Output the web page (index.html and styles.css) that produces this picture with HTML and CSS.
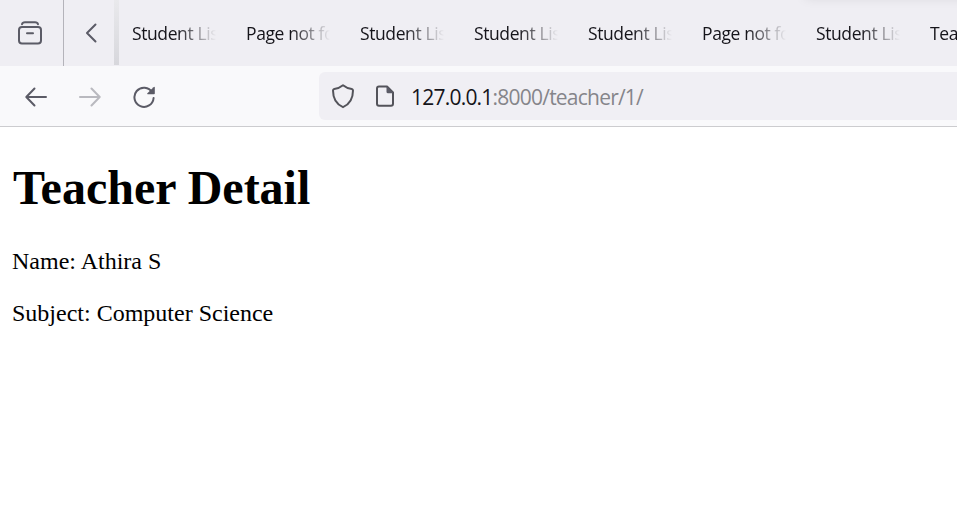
FILE: index.html
```html
<!DOCTYPE html>
<html lang="en">
<head>
<meta charset="utf-8">
<title>Teacher Detail</title>
<link rel="stylesheet" href="styles.css">
</head>
<body>
<header class="browser">
  <div class="tabbar">
    <div class="recent">
      <svg class="icon" width="26" height="26" viewBox="0 0 26 26"><path d="M5 4.2Q5.5 2.2 8 2.2H18Q20.500 2.200 21 4.200"/><rect x="2" y="7" width="22" height="16.500" rx="3"/><path d="M10 13.200H16"/></svg>
    </div>
    <div class="scroll">
      <svg class="icon" width="14" height="22" viewBox="0 0 14 22"><path d="M11.500 2.500L3 11L11.500 19.500"/></svg>
    </div>
    <nav class="tabs">
      <div class="tab"><span class="label">Student List</span></div>
      <div class="tab"><span class="label">Page not found</span></div>
      <div class="tab"><span class="label">Student List</span></div>
      <div class="tab"><span class="label">Student List</span></div>
      <div class="tab"><span class="label">Student List</span></div>
      <div class="tab"><span class="label">Page not found</span></div>
      <div class="tab"><span class="label">Student List</span></div>
      <div class="tab"><span class="label">Teacher Detail</span></div>
    </nav>
    <div class="shade"></div>
  </div>
  <div class="toolbar">
    <div class="nav">
      <svg class="icon" width="24" height="24" viewBox="0 0 24 24"><path d="M22 12H2.500M10.500 3.500L2.300 12L10.500 20.500"/></svg>
      <svg class="icon disabled" width="24" height="24" viewBox="0 0 24 24"><path d="M2 12H21.500M13.500 3.500L21.700 12L13.500 20.500"/></svg>
      <svg class="icon" width="24" height="24" viewBox="0 0 24 24"><path d="M20.200 7.200A9.600 9.600 0 1 0 21.600 13"/><path class="solid" d="M22.800 2.200V8.500Q22.800 9.300 22 9.300H15.600Q14.800 9 15.400 8.300L21.500 2.200Q22.500 1.500 22.800 2.200Z"/></svg>
    </div>
    <div class="urlbar">
      <svg class="icon dark" width="24" height="26" viewBox="0 0 24 26"><path d="M12 2.200C9.500 4.200 6 5.700 3.200 6Q2 6.300 2 7.600C2 15 4.500 21 12 24.200C19.500 21 22 15 22 7.600Q22 6.300 20.800 6C18 5.700 14.500 4.200 12 2.200Z"/></svg>
      <svg class="icon dark" width="20" height="24" viewBox="0 0 20 24"><path d="M12 2.500H4Q2 2.500 2 4.500V19.800Q2 21.800 4 21.800H16Q18 21.800 18 19.800V8.500Z"/><path class="solid" d="M11.500 2L18.800 9.300H13Q11.500 9.300 11.500 7.800Z"/></svg>
      <span class="url"><span class="host">127.0.0.1</span>:8000/teacher/1/</span>
    </div>
  </div>
</header>
<main class="page">
  <h1>Teacher Detail</h1>
  <p>Name: Athira S</p>
  <p>Subject: Computer Science</p>
</main>
</body>
</html>
```
FILE: styles.css
```css
* { box-sizing: border-box; }
body {
  margin: 0;
  height: 508px;
  overflow: hidden;
  background: #fff;
}
.browser {
  font-family: "Open Sans", "Noto Sans", sans-serif;
  color: #15141a;
}
.tabbar {
  position: relative;
  display: flex;
  height: 66px;
  background: #efeef3;
  overflow: hidden;
}
.recent {
  display: flex;
  align-items: center;
  flex: none;
  width: 64px;
  padding-left: 17px;
  border-right: 1px solid #b4b3ba;
}
.scroll {
  display: flex;
  align-items: center;
  flex: none;
  width: 56px;
  padding-left: 20px;
  background: linear-gradient(#e9e9ec, #d7d7dc) 50px 0 / 5px 65px no-repeat;
}
.tabs { display: flex; }
.tab {
  flex: none;
  display: flex;
  align-items: center;
  width: 114px;
  padding-left: 12px;
}
.label {
  width: 84px;
  overflow: hidden;
  white-space: nowrap;
  font-size: 17.5px;
  letter-spacing: -0.4px;
  mask-image: linear-gradient(to right, #000 45px, transparent 84px);
}
.shade {
  position: absolute;
  top: -12px;
  left: 805px;
  width: 200px;
  height: 10px;
  box-shadow: 0 0 12px rgba(0, 0, 0, .1);
}
.toolbar {
  display: flex;
  align-items: center;
  height: 61px;
  padding-left: 24px;
  background: #f9f9fb;
  border-bottom: 1px solid #cccccf;
}
.nav {
  display: flex;
  gap: 30px;
  width: 295px;
  padding-top: 2px;
}
.urlbar {
  display: flex;
  align-items: center;
  flex: 1;
  height: 48px;
  padding-left: 12px;
  background: #f0eff4;
  border-radius: 6px 0 0 6px;
}
.url {
  margin-left: 16px;
  padding-top: 1px;
  font-size: 21px;
  letter-spacing: -0.78px;
  white-space: nowrap;
  color: #85858a;
}
.host { color: #15141a; }
.icon {
  display: block;
  flex: none;
  fill: none;
  stroke: #5b5b66;
  stroke-width: 2;
  stroke-linecap: round;
  stroke-linejoin: round;
}
.icon + .dark { margin-left: 20px; }
.dark { stroke: #53535a; }
.disabled { opacity: .4; }
.solid { fill: #5b5b66; stroke: none; }
.page {
  padding: 33px 12px 0;
  font-family: "Liberation Serif", serif;
  font-size: 24px;
  line-height: 28px;
  color: #000;
}
.page h1 {
  margin: 0 0 31px;
  padding-left: 1px;
  font-size: 48px;
  line-height: 56px;
}
.page p { margin: 0 0 24px; }
```
